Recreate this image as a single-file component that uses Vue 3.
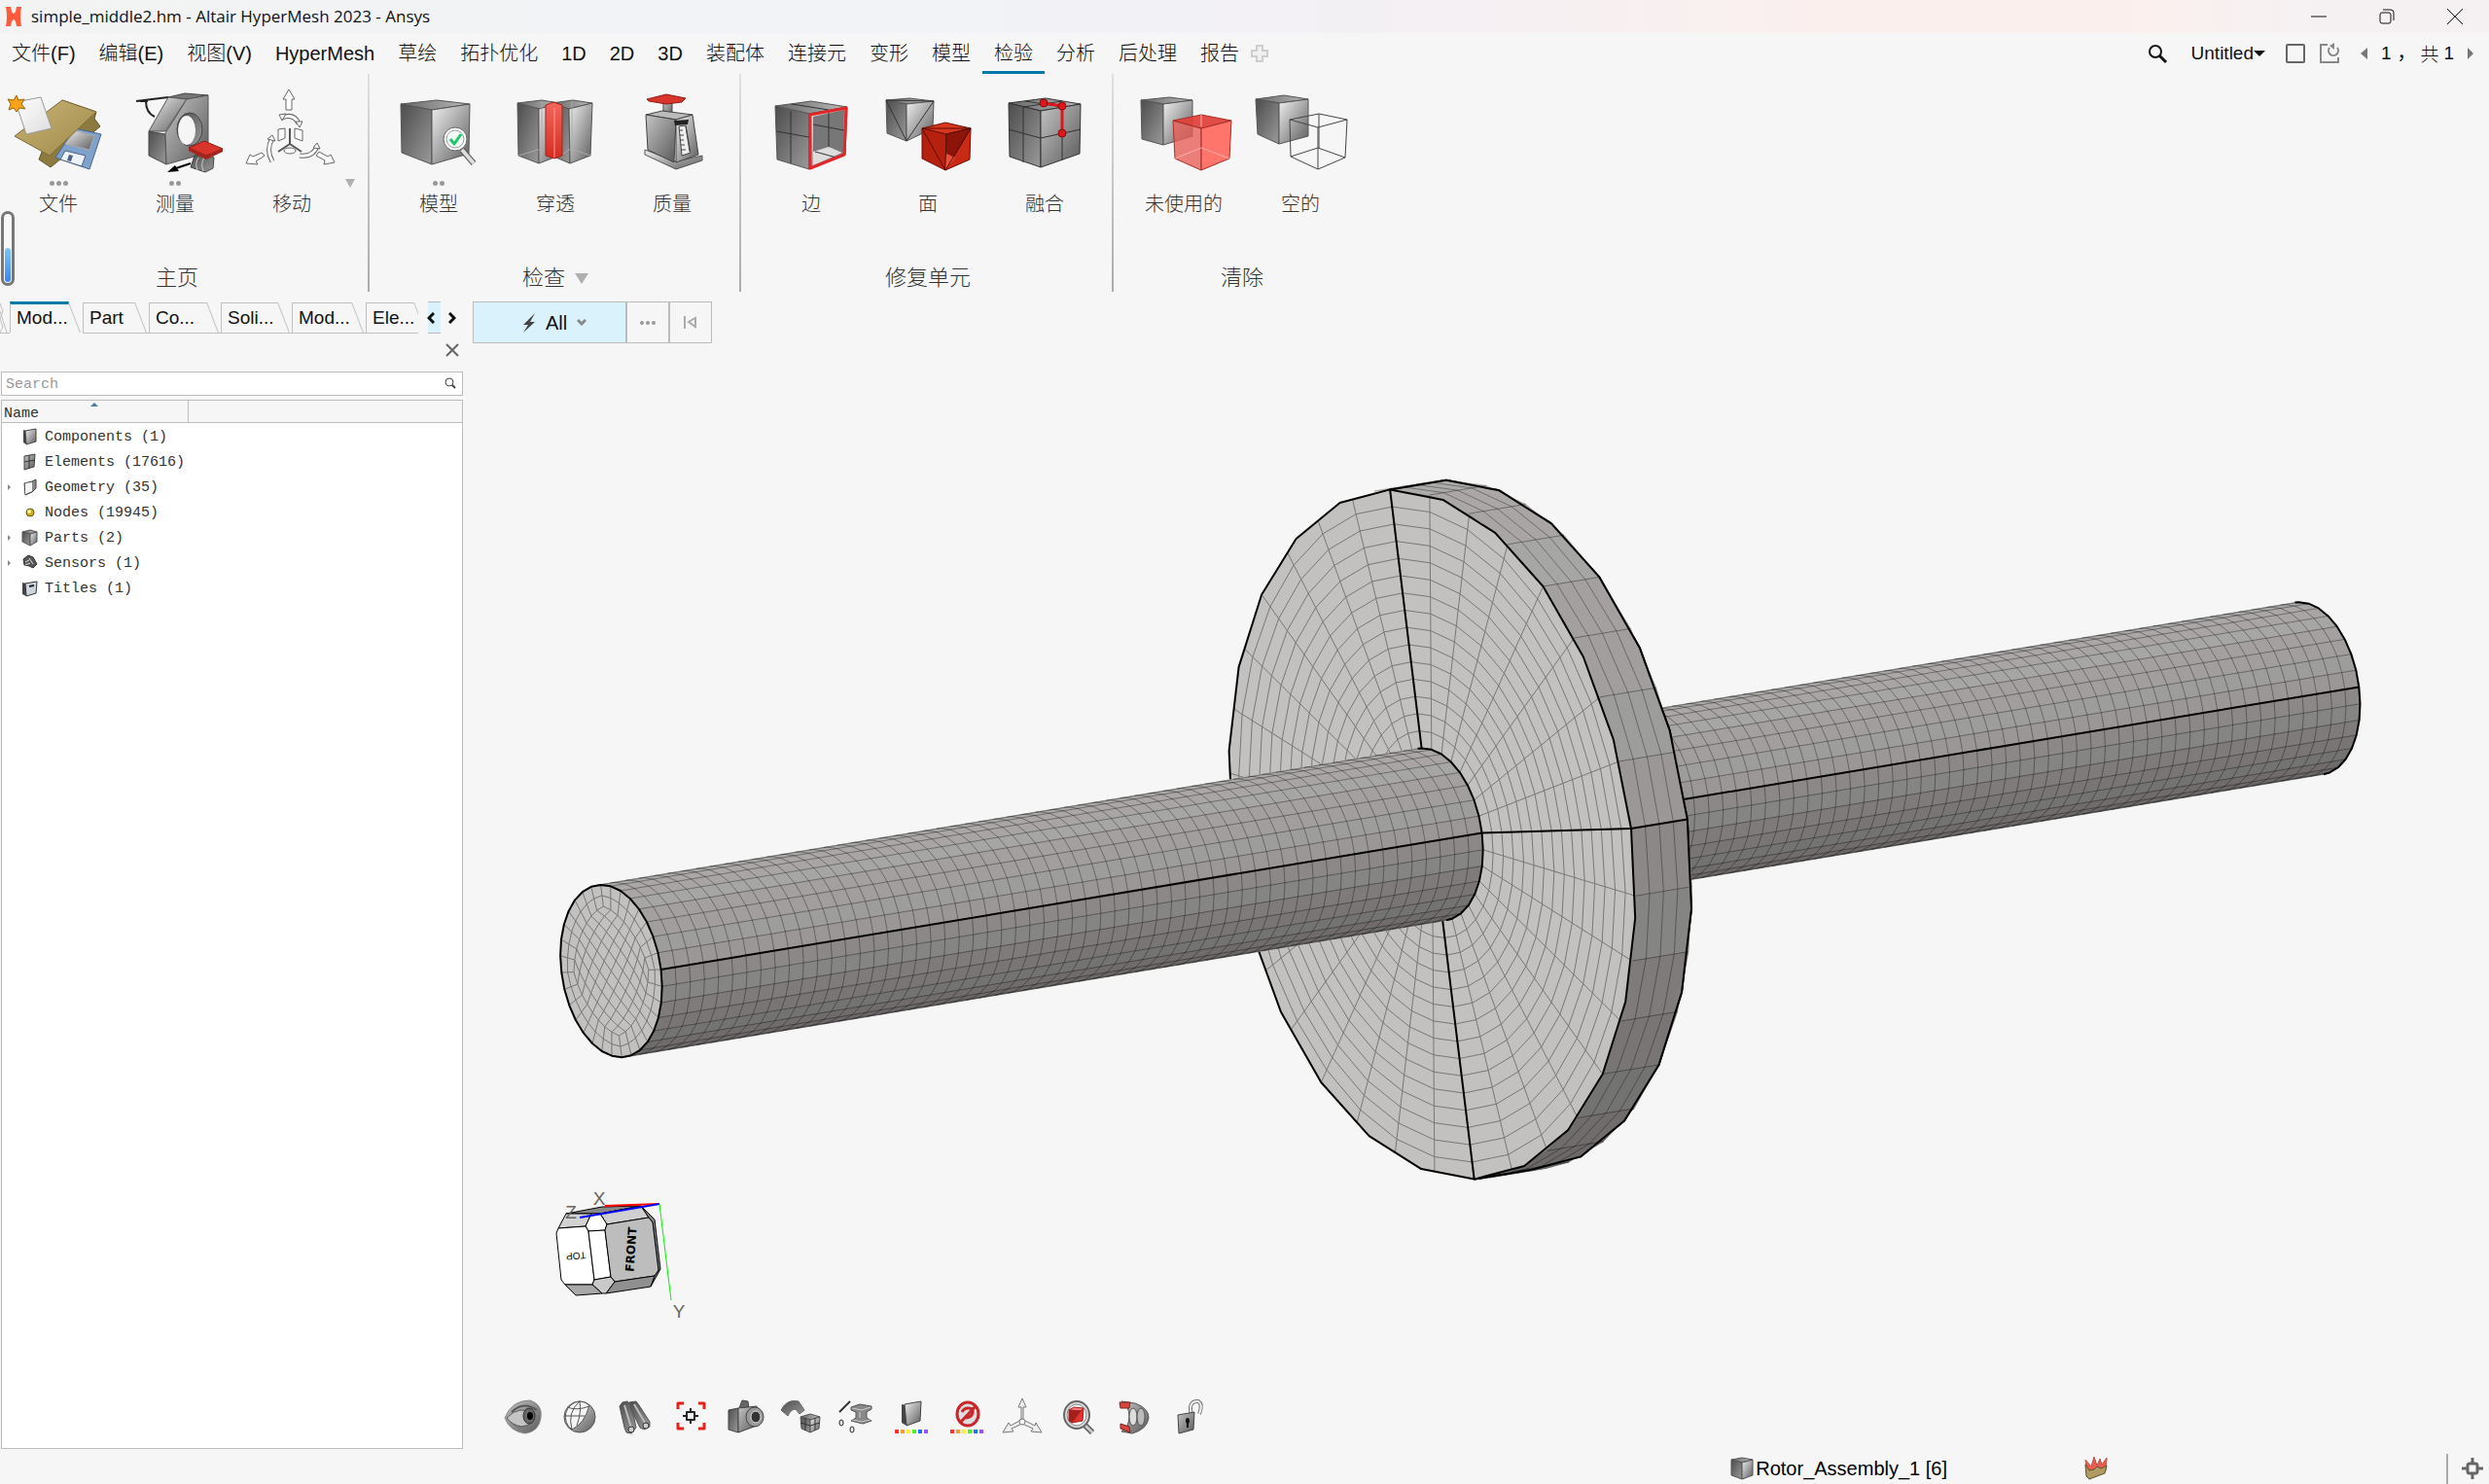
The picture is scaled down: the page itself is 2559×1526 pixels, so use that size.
<script setup>
import { ref } from 'vue'

const menus = ['文件(F)', '编辑(E)', '视图(V)', 'HyperMesh', '草绘', '拓扑优化', '1D', '2D', '3D', '装配体', '连接元', '变形', '模型', '检验', '分析', '后处理', '报告']
const activeMenu = ref('检验')
const query = ref('')

const tabs = [
  { label: 'Mod...', w: 75 },
  { label: 'Part', w: 68 },
  { label: 'Co...', w: 74 },
  { label: 'Soli...', w: 73 },
  { label: 'Mod...', w: 76 },
  { label: 'Ele...', w: 54 }
]

/* ---------- icon helpers ---------- */
const poly = (pts, fill, stroke, w) => ({ d: 'M' + pts.map(p => p.join(',')).join('L') + 'Z', fill, stroke, w })
const line = (d, stroke, w) => ({ d, fill: 'none', stroke, w })
const disc = (x, y, rx, ry, fill, stroke, w) => ({ d: `M${x - rx},${y}a${rx},${ry} 0 1,0 ${2 * rx},0a${rx},${ry} 0 1,0 ${-2 * rx},0Z`, fill, stroke, w })
const box = (l, t, r, f, bl, bf, br, c = ['url(#gTop)', 'url(#gDark)', 'url(#gLight)'], s = '#555') => [
  poly([l, t, r, f], c[0], s, 1),
  poly([l, f, bf, bl], c[1], s, 1),
  poly([f, r, br, bf], c[2], s, 1)
]

const fileIcon = [
  poly([[64, 23], [99, 35], [97, 42], [103, 50], [52, 92], [40, 84]], '#8d7a3f', '#5f522a', 1),
  poly([[77, 52], [104, 58], [92, 94], [57, 82]], '#7ea2cc', '#48658c', 1),
  poly([[77, 54], [97, 60], [92, 74], [67, 68]], 'url(#gLight)', '#aaa', 1),
  poly([[67, 75], [88, 80], [84, 91], [62, 84]], '#eef2f6', '#4a6284', 1),
  poly([[71, 79], [75, 80], [73, 86], [69, 85]], '#4a6284'),
  poly([[64, 23], [99, 35], [51, 80], [15, 60]], 'url(#gTan)', '#7b6a38', 1),
  poly([[16, 25], [42, 20], [53, 52], [27, 58]], 'url(#gPaper)', '#999', 1),
  poly([[17, 18], [19, 23], [25, 22], [22, 27], [26, 32], [20, 31], [17, 35], [14, 31], [9, 33], [11, 27], [8, 22], [14, 23]], '#f7a416', '#9a6510', 1)
]
const measureIcon = [
  line('M20,24L53,20M24,24L32,24M30,24Q30,36 39,40', '#222', 2),
  poly([[53, 20], [70, 16], [94, 18], [72, 22]], '#777', '#444', 1),
  poly([[53, 20], [72, 22], [50, 55], [33, 55]], 'url(#gLight)', '#555', 1),
  poly([[33, 55], [50, 58], [51, 89], [33, 80]], 'url(#gDark)', '#444', 1),
  poly([[72, 22], [94, 18], [94, 77], [51, 89], [50, 57]], 'url(#gMid)', '#555', 1),
  disc(75, 53, 13, 17, 'url(#gDark)', '#444', 1),
  disc(72, 54, 9, 15, '#f5f5f5'),
  line('M76,88L58,94', '#000', 2), poly([[52, 97], [60, 90], [64, 96]], '#000'),
  poly([[80, 80], [94, 78], [100, 82], [99, 93], [91, 97], [76, 92]], 'url(#gDark)', '#444', 1),
  line('M84,82Q80,88 83,95M90,82Q86,88 89,96', '#ccc', 1),
  poly([[74, 72], [90, 65], [109, 73], [92, 80]], '#d8342b', '#8e1c16', 1),
  poly([[74, 72], [92, 80], [109, 73], [109, 76], [92, 84], [74, 75]], '#a4241d')
]
const moveIcon = [
  poly([[57, 12], [63, 22], [60, 22], [60, 33], [54, 33], [54, 22], [51, 22]], '#fff', '#666', 1),
  line('M58,52V68L46,76M58,68L70,76', '#555', 2),
  poly([[46, 53], [53, 52], [53, 62], [46, 65]], '#fff', '#666', 1), poly([[63, 52], [71, 54], [71, 65], [63, 62]], '#fff', '#666', 1),
  disc(58, 75, 6, 3, '#fff', '#666', 1),
  line('M50,41Q62,36 67,47', '#666', 5), line('M50,41Q62,36 67,47', '#fff', 3), poly([[47, 38], [54, 37], [50, 44]], '#fff', '#666', 1), poly([[64, 45], [71, 45], [68, 51]], '#fff', '#666', 1),
  line('M40,86Q33,74 40,62', '#666', 5), line('M40,86Q33,74 40,62', '#fff', 3), poly([[35, 63], [40, 59], [43, 65]], '#fff', '#666', 1),
  line('M68,80Q82,82 86,70', '#666', 5), line('M68,80Q82,82 86,70', '#fff', 3), poly([[82, 72], [86, 67], [89, 73]], '#fff', '#666', 1),
  poly([[13, 88], [17, 79], [20, 81], [29, 77], [32, 80], [23, 86], [25, 89]], '#fff', '#666', 1),
  poly([[104, 87], [100, 79], [97, 81], [88, 76], [85, 80], [94, 85], [93, 89]], '#fff', '#666', 1)
]
const modelIcon = [
  ...box([21, 27], [58, 23], [92, 27], [53, 33], [22, 77], [53, 89], [91, 78]),
  line('M84,74L96,88', '#555', 6), line('M84,74L96,88', '#ddd', 4),
  disc(77, 63, 12, 12, '#fff', '#666', 1), disc(77, 63, 9, 9, '#f4fffa', '#999', 1),
  line('M72,63L76,68L83,58', '#1ec968', 3)
]
const penetrateIcon = [
  ...box([21, 26], [46, 23], [64, 26], [43, 32], [22, 80], [43, 88], [64, 80]),
  ...box([56, 26], [78, 23], [98, 26], [74, 32], [56, 80], [75, 88], [96, 80]),
  line('M22,80L46,73L50,78M68,78L76,73L96,80M46,24V73M77,24V73', '#aaa', 1),
  poly([[50, 28], [58, 25], [67, 28], [67, 80], [59, 83], [50, 80]], 'url(#gRed)', '#a8231b', 1), line('M59,31V82', '#ff9a90', 1)
]
const massIcon = [
  poly([[51, 25], [60, 25], [60, 40], [51, 40]], 'url(#gMid)', '#444', 1),
  poly([[34, 22], [54, 17], [74, 21], [70, 25], [54, 27], [36, 24]], '#d8342b', '#8e1c16', 1),
  poly([[32, 74], [64, 86], [91, 80], [91, 85], [64, 94], [32, 79]], 'url(#gLight)', '#555', 1),
  poly([[33, 38], [50, 34], [81, 38], [64, 43]], '#bbb', '#444', 1),
  poly([[33, 38], [64, 43], [62, 87], [35, 74]], 'url(#gMid)', '#444', 1),
  poly([[64, 43], [81, 38], [87, 79], [64, 87]], 'url(#gLight)', '#444', 1),
  poly([[62, 44], [77, 43], [76, 48], [63, 49]], '#222'),
  poly([[67, 50], [74, 49], [79, 77], [70, 80]], '#eee', '#444', 1),
  line('M67,54h4M68,59h4M68,64h4M69,69h4M70,74h4M74,50L78,76', '#444', 1)
]
const edgeIcon = [
  ...box([23, 29], [60, 24], [97, 30], [58, 37], [25, 84], [58, 94], [95, 79]),
  poly([[62, 40], [94, 33], [92, 77], [62, 90]], '#777'),
  poly([[62, 76], [78, 71], [92, 77], [62, 90]], '#ddd'),
  line('M39,34V88M24,55L58,61M40,27L78,33M62,48L94,54M78,36V71M64,76L86,82', '#333', 1),
  line('M59,38L96,31L94,79L59,93Z', '#e3262a', 3)
]
const faceIcon = [
  ...box([17, 23], [41, 21], [66, 24], [38, 27], [18, 57], [38, 65], [65, 52]),
  line('M17,23L38,65L66,24M17,23L66,24', '#333', 1),
  ...box([54, 52], [78, 46], [104, 52], [79, 58], [54, 83], [78, 95], [103, 84], ['#d8361f', '#b5200f', '#c92a16'], '#6c1208'),
  poly([[79, 58], [104, 52], [78, 95]], '#8c1408', '#5c0d05', 1), poly([[79, 78], [88, 82], [78, 95]], '#e8503c'),
  line('M54,52L78,95L104,52L54,52', '#5c0d05', 1)
]
const mergeIcon = [
  ...box([23, 26], [61, 21], [97, 27], [56, 34], [24, 81], [56, 92], [96, 78], ['url(#gTop)', 'url(#gDark)', 'url(#gMid)'], '#333'),
  line('M38,30V87M23,53L56,62L97,53M40,24L78,30V85M78,24L38,30', '#333', 1),
  line('M59,26L78,29V57', '#e0161c', 3),
  disc(59, 26, 4, 4, '#e0161c', '#8a0d10', 1), disc(78, 29, 4, 4, '#e0161c', '#8a0d10', 1), disc(78, 57, 4, 4, '#e0161c', '#8a0d10', 1)
]
const unusedIcon = [
  ...box([16, 23], [45, 20], [69, 23], [39, 27], [17, 63], [39, 69], [69, 60]),
  ...box([49, 44], [78, 38], [109, 44], [78, 52], [51, 83], [78, 95], [107, 83], ['#e0403aee', '#e8605acc', '#ff6a60ee'], '#a82f29'),
  line('M51,83L78,72L107,83M78,38V50', '#ffb0aa', 1)
]
const emptyIcon = [
  ...box([14, 22], [43, 18], [68, 22], [38, 26], [16, 58], [38, 68], [68, 60]),
  line('M49,43L79,37L108,43L78,51ZM49,43L50,81L78,94L106,82L108,43M78,51V94M50,81L78,72L106,82M79,37V72', '#444', 1)
]

const groups = [
  { label: '主页', arrow: false, more: true, tools: [{ label: '文件', dots: 3, icon: fileIcon }, { label: '测量', dots: 2, icon: measureIcon }, { label: '移动', dots: 0, icon: moveIcon }] },
  { label: '检查', arrow: true, tools: [{ label: '模型', dots: 2, icon: modelIcon }, { label: '穿透', dots: 0, icon: penetrateIcon }, { label: '质量', dots: 0, icon: massIcon }] },
  { label: '修复单元', tools: [{ label: '边', dots: 0, icon: edgeIcon }, { label: '面', dots: 0, icon: faceIcon }, { label: '融合', dots: 0, icon: mergeIcon }] },
  { label: '清除', tools: [{ label: '未使用的', dots: 0, icon: unusedIcon }, { label: '空的', dots: 0, icon: emptyIcon }] }
]

const tree = [
  { label: 'Components (1)', open: false, icon: [poly([[3, 2], [6, 3], [6, 17], [3, 15]], '#444'), poly([[5, 3], [16, 1], [16, 14], [6, 17]], 'url(#gLight)', '#444', 1)] },
  { label: 'Elements (17616)', open: false, icon: [poly([[4, 3], [15, 1], [14, 14], [4, 17]], 'url(#gMid)', '#444', 1), line('M9,2V16M4,9L15,7', '#333', 1)] },
  { label: 'Geometry (35)', open: true, icon: [poly([[4, 5], [12, 3], [16, 1], [16, 10], [12, 14], [5, 17]], '#888', '#444', 1), poly([[5, 5], [12, 4], [12, 13], [5, 16]], '#f4f4f4')] },
  { label: 'Nodes (19945)', open: false, icon: [disc(10, 9, 4, 4, '#c9ab22', '#6b5a10', 1), disc(9, 8, 2, 2, '#fff2a0')] },
  { label: 'Parts (2)', open: true, icon: box([2, 3], [10, 1], [17, 3], [10, 5], [2, 13], [10, 17], [17, 13]) },
  { label: 'Sensors (1)', open: true, icon: [poly([[3, 5], [8, 1], [13, 3], [17, 10], [13, 14], [9, 12], [4, 11]], '#555', '#333', 1), line('M5,8L9,6M5,11L10,9M9,4L13,10', '#ddd', 1)] },
  { label: 'Titles (1)', open: false, icon: [poly([[2, 3], [6, 4], [6, 17], [2, 15]], '#444'), poly([[5, 4], [17, 2], [16, 14], [6, 17]], '#cdd6de', '#333', 1), line('M9,7L14,6', '#222', 2)] }
]

const rainbow = ['#f33', '#f93', '#fe3', '#5e2', '#17f', '#95f'].map((c, i) => poly([[5 + i * 6, 34], [9 + i * 6, 34], [9 + i * 6, 38], [5 + i * 6, 38]], c))
const viewTools = [
  { name: '显示', icon: [{ d: 'M3,22Q10,4 29,4Q42,8 40,22Q38,36 24,38Q8,36 3,22Z', fill: 'url(#gMid)', stroke: '#888', w: 1 }, { d: 'M5,22Q18,8 34,18Q32,30 20,31Q10,29 5,22Z', fill: '#c4c4c4', stroke: '#555', w: 1 }, disc(28, 20, 6, 8, '#666', '#333', 1), disc(29, 20, 3, 4, '#000'), line('M10,16Q22,4 36,14', '#555', 2), line('M8,26Q20,38 34,28', '#777', 1)] },
  { name: '视图', icon: [disc(23, 21, 16, 16, 'url(#gLight)', '#555', 1), { d: 'M23,5A16,16 0 0,0 15,34Q28,28 33,9Q28,5 23,5Z', fill: '#f4f4f4', stroke: '#555', w: 1 }, line('M7,20H28M23,5Q10,16 15,34M23,5Q25,16 20,30M10,11Q20,15 33,10', '#555', 1)] },
  { name: '查找', icon: [poly([[7, 10], [10, 6], [15, 5], [19, 9], [24, 32], [19, 38], [14, 37], [12, 32]], 'url(#gDark)', '#555', 1), poly([[17, 6], [24, 5], [27, 9], [38, 26], [38, 31], [32, 34], [28, 32], [19, 14]], 'url(#gDark)', '#555', 1), line('M12,9L19,32M22,8L33,27', '#bbb', 2), disc(19, 34, 3, 3, '#ccc', '#333', 1), disc(34, 30, 3, 3, '#ccc', '#333', 1)] },
  { name: '适应窗口', icon: [line('M10,13V7H16M31,7H37V13M37,27V33H31M16,33H10V27', '#e0241c', 3), line('M19,16H27V24H19ZM23,12V16M23,24V28M15,20H19M27,20H31', '#222', 2)] },
  { name: '截图', icon: [poly([[16, 12], [19, 4], [25, 5], [26, 14]], '#666', '#444', 1), poly([[5, 14], [15, 12], [15, 37], [5, 34]], 'url(#gDark)', '#444', 1), poly([[15, 12], [34, 10], [34, 30], [15, 37]], 'url(#gMid)', '#444', 1), disc(32, 21, 9, 10, '#999', '#444', 1), disc(33, 21, 5, 6, '#333', '#ddd', 1)] },
  { name: '旋转', icon: [{ d: 'M2,14Q8,2 20,5L26,14L21,18L17,13Q12,13 9,20Z', fill: 'url(#gDark)', stroke: '#666', w: 1 }, ...box([22, 21], [32, 18], [42, 21], [32, 24], [23, 33], [32, 37], [41, 33]), line('M27,22V35M37,22V35M22,27L32,30L42,27', '#333', 1)] },
  { name: '单元', icon: [line('M5,16L16,5', '#333', 2), disc(7, 27, 2, 3, 'none', '#222', 1), disc(18, 34, 2, 3, 'none', '#222', 1), poly([[17, 11], [26, 8], [38, 10], [38, 13], [33, 16], [33, 22], [38, 25], [29, 28], [17, 25], [22, 22], [22, 16], [17, 14]], '#888', '#555', 1), line('M18,12L28,14L37,11M18,24L28,26L37,24M26,16V22', '#ccc', 1)] },
  { name: '颜色', icon: [poly([[12, 8], [16, 9], [17, 30], [12, 27]], '#444'), poly([[15, 8], [32, 5], [31, 25], [17, 30]], 'url(#gLight)', '#444', 1), ...rainbow] },
  { name: '清除颜色', icon: [disc(23, 18, 11, 12, '#ddd', '#c8282b', 3), line('M17,16Q20,10 28,13Q29,22 20,22M16,26L31,10', '#c8282b', 3), ...rainbow] },
  { name: '坐标系', icon: [poly([[22, 2], [26, 11], [23, 11], [23, 24], [35, 30], [36, 27], [42, 37], [31, 36], [33, 33], [22, 28], [11, 33], [13, 36], [2, 37], [8, 27], [10, 30], [21, 24], [21, 11], [18, 11]], '#eee', '#777', 1), disc(22, 26, 3, 3, '#fff', '#777', 1)] },
  { name: '隔离', icon: [line('M29,29L37,37', '#555', 6), line('M29,29L37,37', '#ccc', 3), disc(21, 19, 13, 14, '#ddd', '#666', 2), disc(21, 19, 10, 11, '#f5f5f5', '#888', 1), ...box([13, 14], [18, 11], [28, 12], [25, 15], [13, 25], [16, 27], [27, 25], ['#f77', '#a1201b', '#e0362f'], '#a1201b')] },
  { name: '剖切', icon: [{ d: 'M10,5L24,7Q38,12 38,22Q36,34 21,38L10,36L16,30Q20,20 16,11Z', fill: 'url(#gMid)', stroke: '#555', w: 1 }, disc(22, 21, 4, 9, '#ddd', '#555', 1), disc(30, 21, 4, 9, '#bbb', '#555', 1), poly([[8, 6], [19, 6], [18, 12], [9, 12]], '#d8443e', '#7d2420', 1), poly([[9, 28], [18, 31], [19, 37], [9, 33]], '#d8443e', '#7d2420', 1)] },
  { name: '锁定', icon: [line('M25,20Q21,4 32,5Q37,8 33,18', '#777', 4), line('M25,20Q21,4 32,5Q37,8 33,18', '#eee', 2), poly([[11, 19], [28, 16], [27, 34], [12, 38]], 'url(#gMid)', '#444', 1), disc(21, 25, 2, 3, '#111'), line('M21,26V32', '#111', 2)] }
]

/* ---------- rotor mesh, oblique projection ---------- */
const U = [204.6, -6]
const V = [43.3, 354.6]
const THICK = [57.8, -9.6]
const SHAFT = [844, -140.5]
const FRONT = [1472.4, 857]
const add = (a, b, k = 1) => [a[0] + b[0] * k, a[1] + b[1] * k]
const at = (c, r, deg) => {
  const t = (deg * Math.PI) / 180
  return add(add(c, U, r * Math.cos(t)), V, r * Math.sin(t))
}
const path = (pts, close) => 'M' + pts.map(p => p[0].toFixed(1) + ' ' + p[1].toFixed(1)).join('L') + (close ? 'Z' : '')
const span = (a, b, step) => {
  const out = []
  for (let t = a; t < b - 0.01; t += step) out.push(t)
  out.push(b)
  return out
}
const STEP = 11.25
const LO = -94.5
const HI = 85.5
const BACK = add(FRONT, THICK)

const stops = [[-95, 172], [-60, 167], [-25, 159], [-1, 151], [1, 141], [20, 130], [45, 116], [70, 107], [90, 102]]
function shade(deg, k) {
  let i = 0
  while (i < stops.length - 2 && deg > stops[i + 1][0]) i++
  const [a, va] = stops[i]
  const [b, vb] = stops[i + 1]
  const v = Math.round(va + ((vb - va) * (deg - a)) / (b - a))
  const tint = Math.abs(k) % 3 === 1 ? 0 : 3
  return `rgb(${v + 1},${v - tint + 1},${v - tint})`
}
function tube(c0, axis, r, n) {
  const angles = [LO, ...span(-90, 78.75, STEP), HI]
  const c1 = add(c0, axis)
  const facets = []
  for (let i = 0; i < angles.length - 1; i++) {
    const [a, b] = [angles[i], angles[i + 1]]
    facets.push({ d: path([at(c0, r, a), at(c0, r, b), at(c1, r, b), at(c1, r, a)], true), fill: shade((a + b) / 2, i) })
  }
  let mesh = ''
  for (const a of angles.slice(1, -1)) mesh += path([at(c0, r, a), at(c1, r, a)])
  for (let i = 1; i < n; i++) mesh += path(angles.map(a => at(add(c0, axis, i / n), r, a)))
  return { facets, mesh, zero: path([at(c0, r, 0), at(c1, r, 0)]), arc: path(angles.map(a => at(c1, r, a))) }
}
const START = add(FRONT, SHAFT, -1)
const rear = tube(BACK, SHAFT, 0.25, 58)
const nearShaft = tube(START, SHAFT, 0.25, 58)
const rim = tube(BACK, [-THICK[0], -THICK[1]], 1, 4)
const rimOuter = path([at(FRONT, 1, -90), ...span(-90, 90, 15).map(a => at(BACK, 1, a)), at(FRONT, 1, 90)])
const faceOutline = path(span(0, 345, 15).map(a => at(FRONT, 1, a)), true)

let faceMesh = ''
for (let k = 0; k < 32; k++) faceMesh += path([at(FRONT, 0.25, k * STEP), at(FRONT, 0.995, k * STEP)])
for (let i = 1; i < 15; i++) faceMesh += path(span(0, 348.75, STEP).map(a => at(FRONT, 0.25 + (0.75 * i) / 15, a)), true)
const faceAxes = path([at(FRONT, 0.25, -90), at(FRONT, 1, -90)]) + path([at(FRONT, 0.25, 90), at(FRONT, 1, 90)]) + path([at(FRONT, 0.25, 0), at(FRONT, 1, 0)])

/* butterfly mesh of the shaft end */
const coreR = k => 0.25 * (0.75 - 0.08 * Math.sin((Math.PI * (k % 8)) / 8))
const rim32 = k => at(START, coreR(k), k * STEP)
let capMesh = ''
for (let k = 0; k < 32; k++) capMesh += path([rim32(k), at(START, 0.25, k * STEP)])
capMesh += path([...Array(32).keys()].map(rim32), true)
capMesh += path([...Array(32).keys()].map(k => at(START, (coreR(k) + 0.25) / 2, k * STEP)), true)
const core = (i, j) => {
  const s = i / 8
  const t = j / 8
  const bottom = rim32(i)
  const right = rim32(8 + j)
  const top = rim32(24 - i)
  const left = rim32((32 - j) % 32)
  const [p00, p10, p11, p01] = [rim32(0), rim32(8), rim32(16), rim32(24)]
  return [0, 1].map(n => (1 - t) * bottom[n] + t * top[n] + (1 - s) * left[n] + s * right[n] - ((1 - s) * (1 - t) * p00[n] + s * (1 - t) * p10[n] + s * t * p11[n] + (1 - s) * t * p01[n]))
}
for (let i = 1; i < 8; i++) {
  capMesh += path([...Array(9).keys()].map(j => core(i, j)))
  capMesh += path([...Array(9).keys()].map(j => core(j, i)))
}
const capOutline = path(span(0, 348.75, STEP).map(a => at(START, 0.25, a)), true)
</script>

<template>
  <div class="app">
    <svg class="defs" width="0" height="0" aria-hidden="true">
      <defs>
        <linearGradient id="gTop" x1="0" y1="0" x2="1" y2="0"><stop offset="0" stop-color="#666" /><stop offset="1" stop-color="#bbb" /></linearGradient>
        <linearGradient id="gDark" x1="0" y1="0" x2="1" y2="1"><stop offset="0" stop-color="#4c4c4c" /><stop offset="1" stop-color="#9a9a9a" /></linearGradient>
        <linearGradient id="gLight" x1="0" y1="0" x2="1" y2="1"><stop offset="0" stop-color="#f0f0f0" /><stop offset="1" stop-color="#5c5c5c" /></linearGradient>
        <linearGradient id="gMid" x1="0" y1="0" x2="1" y2="1"><stop offset="0" stop-color="#c4c4c4" /><stop offset="1" stop-color="#5a5a5a" /></linearGradient>
        <linearGradient id="gRed" x1="0" y1="0" x2="0" y2="1"><stop offset="0" stop-color="#f4675c" /><stop offset="1" stop-color="#d42c20" /></linearGradient>
        <linearGradient id="gTan" x1="0" y1="0" x2="1" y2="1"><stop offset="0" stop-color="#c9b375" /><stop offset="1" stop-color="#a08a4a" /></linearGradient>
        <linearGradient id="gPaper" x1="0" y1="0" x2="1" y2="1"><stop offset="0" stop-color="#fff" /><stop offset="1" stop-color="#ddd" /></linearGradient>
      </defs>
    </svg>

    <header class="titlebar">
      <svg class="logo" width="18" height="20" viewBox="0 0 18 20"><path d="M1,0H6Q7,7 9,7Q11,7 12,0H17Q15,10 17,20H12Q11,13 9,13Q7,13 6,20H1Q3,10 1,0Z" fill="#ff5a3c" /></svg>
      <span class="title">simple_middle2.hm - Altair HyperMesh 2023 - Ansys</span>
      <div class="wincontrols">
        <button aria-label="最小化"><svg width="16" height="16"><path d="M0,8H16" stroke="#111" stroke-width="1" /></svg></button>
        <button aria-label="还原"><svg width="16" height="16" fill="none" stroke="#111" stroke-width="1"><rect x="1" y="4" width="11" height="11" rx="2" /><path d="M4,1H12Q15,1 15,4V12" /></svg></button>
        <button aria-label="关闭"><svg width="16" height="16"><path d="M0,0L16,16M16,0L0,16" stroke="#111" stroke-width="1" /></svg></button>
      </div>
    </header>

    <nav class="menubar">
      <button v-for="m in menus" :key="m" :class="{ active: m === activeMenu }" @click="activeMenu = m">{{ m }}</button>
      <button class="addpage" aria-label="添加"><svg width="18" height="18"><path d="M6,1H12V6H17V12H12V17H6V12H1V6H6Z" fill="#f0f0f0" stroke="#ccc" stroke-width="2" /></svg></button>
      <div class="session">
        <button aria-label="搜索" class="find"><svg width="22" height="22" fill="none" stroke="#111" stroke-width="2"><circle cx="9" cy="9" r="6" /><path d="M13,13L20,20" stroke-width="3" /></svg></button>
        <button class="page">Untitled<svg width="12" height="8"><path d="M0,1H12L6,7Z" fill="#111" /></svg></button>
        <button aria-label="布局" class="layout"><svg width="22" height="22"><rect x="2" y="2" width="18" height="18" rx="1" fill="none" stroke="#666" stroke-width="2" /></svg></button>
        <button aria-label="刷新" class="reload"><svg width="24" height="22" fill="none" stroke="#888" stroke-width="2"><path d="M10,2H3V20H21V15" /><path d="M12,5A5,5 0 1,0 20,5" /><path d="M17,0L12,3L17,7Z" fill="#888" stroke="none" /></svg></button>
        <button aria-label="上一页" class="step"><svg width="8" height="12"><path d="M7,0V12L0,6Z" fill="#777" /></svg></button>
        <span class="count"><b>1</b><i>，</i><em>共</em><b>1</b></span>
        <button aria-label="下一页" class="step"><svg width="8" height="12"><path d="M1,0V12L7,6Z" fill="#777" /></svg></button>
      </div>
    </nav>

    <section class="ribbon">
      <div class="slider" aria-hidden="true"><span></span></div>
      <div v-for="g in groups" :key="g.label" class="group">
        <div class="tools">
          <button v-for="t in g.tools" :key="t.label" class="tool">
            <svg width="120" height="100" viewBox="0 0 120 100"><path v-for="(s, i) in t.icon" :key="i" :d="s.d" :fill="s.fill" :stroke="s.stroke" :stroke-width="s.w" stroke-linejoin="round" /></svg>
            <span class="dots"><i v-for="n in t.dots" :key="n"></i></span>
            <span class="label">{{ t.label }}</span>
          </button>
          <button v-if="g.more" class="more" aria-label="更多"><svg width="10" height="9"><path d="M0,0H10L5,9Z" fill="#b0b0b0" /></svg></button>
        </div>
        <div class="caption">{{ g.label }}<svg v-if="g.arrow" width="14" height="11"><path d="M0,0H14L7,11Z" fill="#b0b0b0" /></svg></div>
      </div>
    </section>

    <main class="work">
      <aside class="browser">
        <div class="tabs">
          <span class="stub"><svg width="10" height="32" fill="none" stroke="#c0c0c0"><path d="M0,2L3,10L0,18L3,26L0,32M0,10L7,32" /></svg></span>
          <button v-for="(t, i) in tabs" :key="i" class="tab" :class="{ current: i === 0, cut: i === 5 }" :style="{ width: t.w + 'px' }">{{ t.label }}</button>
          <button class="prev" aria-label="向左"><svg width="8" height="12"><path d="M7,1L2,6L7,11" fill="none" stroke="#111" stroke-width="3" /></svg></button>
          <button class="next" aria-label="向右"><svg width="8" height="12"><path d="M1,1L6,6L1,11" fill="none" stroke="#111" stroke-width="3" /></svg></button>
        </div>
        <div class="closerow"><button aria-label="关闭面板"><svg width="14" height="14"><path d="M1,1L13,13M13,1L1,13" stroke="#666" stroke-width="2" /></svg></button></div>
        <label class="search">
          <input v-model="query" type="text" placeholder="Search" aria-label="Search" />
          <svg width="13" height="13" fill="none" stroke="#444" stroke-width="1"><circle cx="6" cy="5" r="4" /><path d="M9,8L12,11" stroke-width="2" /></svg>
        </label>
        <div class="treebox">
          <div class="treehead"><span>Name</span><svg width="8" height="4"><path d="M0,4L4,0L8,4Z" fill="#4a7f9c" /></svg></div>
          <ul>
            <li v-for="n in tree" :key="n.label">
              <svg class="twist" width="8" height="8"><path v-if="n.open" d="M2,1V7L5,4Z" fill="#888" /></svg>
              <svg width="20" height="18"><path v-for="(s, i) in n.icon" :key="i" :d="s.d" :fill="s.fill" :stroke="s.stroke" :stroke-width="s.w" /></svg>
              <span>{{ n.label }}</span>
            </li>
          </ul>
        </div>
      </aside>

      <section class="view">
        <div class="selection">
          <button class="all">
            <svg width="14" height="20"><path d="M13,0L1,12H6L1,20L13,9H8Z" fill="#444" /></svg>All<svg width="10" height="8"><path d="M1,1L5,5L9,1" fill="none" stroke="#888" stroke-width="3" /></svg>
          </button>
          <button aria-label="选项"><svg width="16" height="4" fill="#999"><circle cx="2" cy="2" r="2" /><circle cx="8" cy="2" r="2" /><circle cx="14" cy="2" r="2" /></svg></button>
          <button aria-label="重置"><svg width="14" height="13" fill="none" stroke="#aaa" stroke-width="2"><path d="M1,0V13M12,2V11L5,6Z" /></svg></button>
        </div>

        <svg class="scene" viewBox="477 352 2082 1070" preserveAspectRatio="xMidYMid meet" fill="none">
          <clipPath id="faceClip"><path :d="faceOutline" /></clipPath>
          <path v-for="(f, i) in rear.facets" :key="'r' + i" :d="f.d" :fill="f.fill" :stroke="f.fill" />
          <path :d="rear.mesh" class="sidemesh" />
          <path :d="rear.zero" class="bold" /><path :d="rear.arc" class="bold" />
          <path :d="rimOuter" fill="#8a8785" class="bold" />
          <path v-for="(f, i) in rim.facets" :key="'m' + i" :d="f.d" :fill="f.fill" :stroke="f.fill" />
          <path :d="rim.mesh" class="sidemesh" />
          <path :d="rim.zero" class="bold" /><path :d="rimOuter" class="bold" />
          <path :d="faceOutline" fill="#c2c1bf" />
          <path :d="faceMesh" class="facemesh" clip-path="url(#faceClip)" />
          <path :d="faceOutline" class="bold" /><path :d="faceAxes" class="bold" />
          <path v-for="(f, i) in nearShaft.facets" :key="'n' + i" :d="f.d" :fill="f.fill" :stroke="f.fill" />
          <path :d="nearShaft.mesh" class="sidemesh" />
          <path :d="nearShaft.zero" class="bold" /><path :d="nearShaft.arc" class="bold" />
          <path :d="capOutline" fill="#c2c1bf" />
          <path :d="capMesh" class="facemesh" />
          <path :d="capOutline" class="bold" />

          <g stroke="#000" stroke-width="1" stroke-linejoin="round">
            <path d="M582,1247L619,1240L659,1239L617,1247Z" fill="#888" />
            <path d="M574,1262L582,1247H608L602,1260Z" fill="#d2d2d2" />
            <path d="M617,1247L659,1239L667,1251L624,1258Z" fill="#cfcfcf" />
            <path d="M659,1239L673,1253L679,1304L669,1322L673,1311L677,1305L671,1256L667,1251Z" fill="#888" />
            <path d="M608,1247H617L624,1258L622,1264L605,1265L602,1260Z" fill="#fff" />
            <path d="M574,1262L602,1260L605,1265L611,1315L609,1320H581L577,1315L572,1267Z" fill="#fff" />
            <path d="M605,1265L622,1264L628,1312L611,1315Z" fill="#fff" />
            <path d="M622,1264L624,1258L667,1251L671,1256L677,1305L673,1311L632,1317L628,1312Z" fill="#bdbdbd" />
            <path d="M632,1317L673,1311L669,1322L623,1329Z" fill="#8f8f8f" />
            <path d="M611,1315L628,1312L632,1317L623,1329L619,1329L609,1320Z" fill="#c9c9c9" />
            <path d="M581,1320H609L619,1329L592,1331Z" fill="#a8a8a8" />
          </g>
          <path d="M678,1237L622,1239" stroke="#f00" stroke-width="2" />
          <path d="M678,1237L596,1251" stroke="#00f" stroke-width="2" />
          <path d="M678,1237L690,1336" stroke="#0e0" stroke-width="1" />
          <text x="616" y="1238" class="axis">X</text>
          <text x="587" y="1252" class="axis">Z</text>
          <text x="698" y="1354" class="axis">Y</text>
          <text class="cubetext small" transform="translate(592 1287) rotate(176)">TOP</text>
          <text class="cubetext" transform="translate(653 1284) rotate(-86)">FRONT</text>
        </svg>

        <div class="viewbar">
          <button v-for="t in viewTools" :key="t.name" :aria-label="t.name">
            <svg width="44" height="42"><path v-for="(s, i) in t.icon" :key="i" :d="s.d" :fill="s.fill" :stroke="s.stroke" :stroke-width="s.w" stroke-linejoin="round" /></svg>
          </button>
        </div>
      </section>
    </main>

    <footer class="status">
      <button class="part"><svg width="24" height="24"><path v-for="(s, i) in box([1, 3], [12, 1], [23, 3], [12, 6], [1, 19], [12, 23], [23, 19])" :key="i" :d="s.d" :fill="s.fill" :stroke="s.stroke" /></svg>Rotor_Assembly_1 [6]</button>
      <button class="fire" aria-label="材料"><svg width="24" height="24"><path d="M3,16L1,3L7,10L10,0L13,9L16,2L18,8L23,1L22,14Z" fill="#ef5b4c" stroke="#b0584a" /><path d="M1,8L5,14L10,13L13,10L17,12L23,9L21,17L5,23L2,20Z" fill="#b09c63" stroke="#5d5230" /></svg></button>
      <span class="tail"><button aria-label="设置"><svg width="22" height="22" fill="none" stroke="#666" stroke-width="3"><rect x="6" y="6" width="10" height="10" rx="2" /><path d="M11,0V6M11,16V22M0,11H6M16,11H22" /></svg></button></span>
    </footer>
  </div>
</template>

<style>
html, body { background: #f6f6f6; }
</style>

<style scoped>
.app { min-height: 100vh; display: flex; flex-direction: column; background: #f6f6f6; color: #111; font-family: "Liberation Sans", "Noto Sans CJK SC", sans-serif; font-size: 20px; line-height: 24px; font-weight: 300; }
.app * { box-sizing: border-box; }
.defs { position: absolute; }
button { border: 0; background: none; padding: 0; margin: 0; font: inherit; color: inherit; display: flex; align-items: center; justify-content: center; white-space: nowrap; }
svg { display: block; flex: none; }

.titlebar { height: 34px; display: flex; align-items: center; padding-left: 5px; background: linear-gradient(90deg, #f3f3f3 0%, #f1f3f7 35%, #f3f0f4 55%, #fbefed 75%, #fbefed 85%, #f5f1f2 93%); }
.title { margin-left: 9px; font: 17px/24px "Open Sans", sans-serif; color: #111; }
.wincontrols { margin-left: auto; display: flex; }
.wincontrols button { width: 70px; height: 34px; }

.menubar { height: 42px; display: flex; align-items: stretch; }
.menubar > button { padding: 0 12px; border-bottom: 3px solid transparent; border-top: 3px solid transparent; }
.menubar > button.active { border-bottom-color: #0078a8; }
.menubar > .addpage { padding: 0; }
.session { margin-left: auto; display: flex; align-items: center; font-size: 19px; }
.find { margin-right: 24px; }
.page { margin-right: 20px; }
.layout { margin-right: 12px; }
.reload { margin-right: 20px; }
.count { display: flex; width: 101px; padding-left: 13px; }
.count b, .count i, .count em { font-weight: 400; font-style: normal; }
.count i { width: 30px; padding-left: 6px; }
.count em { width: 24px; font-family: "Noto Sans CJK SC", sans-serif; font-weight: 300; }
.session > .step:last-child { margin-right: 15px; }

.ribbon { height: 229px; display: flex; position: relative; }
.slider { position: absolute; left: 1px; top: 141px; width: 14px; height: 77px; border: 3px solid #777; border-radius: 7px; background: #f8f8f8; padding: 35px 1px 1px; }
.slider span { display: block; height: 100%; border-radius: 3px; background: linear-gradient(#7cc4f8, #3a86f0); }
.group { position: relative; height: 224px; padding: 4px 11px 0 11px; display: flex; flex-direction: column; justify-content: space-between; }
.group:nth-child(2) { padding: 4px 2px 0 0; }
.group:not(:last-child)::after { content: ""; position: absolute; right: 0; top: 0; width: 2px; height: 224px; background: linear-gradient(#e0e0e0, #aaa); }
.group:nth-child(n+4) { padding-left: 12px; }
.tools { display: flex; }
.tool { width: 120px; flex-direction: column; justify-content: flex-start; }
.dots { height: 16px; display: flex; align-items: center; gap: 2px; }
.dots i { width: 5px; height: 5px; border-radius: 50%; background: #999; }
.label { height: 28px; line-height: 28px; color: #333; }
.more { width: 18px; height: 16px; margin: 100px 0 0; padding-right: 18px; }
.caption { width: 100%; height: 28px; font-size: 22px; line-height: 28px; display: flex; justify-content: center; align-items: center; gap: 10px; color: #333; }
.group:nth-child(2) .caption { padding-right: 14px; }

.work { flex: 1; display: flex; min-height: 0; padding-top: 5px; }
.browser { width: 477px; flex: none; display: flex; flex-direction: column; }
.tabs { height: 33px; display: flex; align-items: stretch; font-size: 19px; }
.stub { width: 10px; border-bottom: 1px solid #c0c0c0; }
.tab { position: relative; justify-content: flex-start; padding: 2px 0 0 7px; border-bottom: 1px solid #c0c0c0; }
.tab::before { content: ""; position: absolute; inset: 1px 14px 0 0; border-left: 1px solid #c0c0c0; border-top: 1px solid #c0c0c0; }
.tab::after { content: ""; position: absolute; top: 1px; bottom: 0; right: 14px; border-right: 1px solid #c0c0c0; transform: skewX(21deg); transform-origin: top; }
.tab.current { border-bottom-color: transparent; }
.tab.current::before { inset: 0 14px 0 0; border-top: 3px solid #0078a8; }
.tab.cut::before, .tab.cut::after { right: 4px; }
.tab.cut { overflow: hidden; }
.prev { width: 13px; margin-left: 10px; padding-right: 8px; background: #d9f2fb; border-top: 1px solid #bbb; border-bottom: 1px solid #bbb; }
.next { width: 24px; }
.closerow { height: 39px; display: flex; justify-content: flex-end; padding-right: 5px; }
.closerow button { width: 14px; height: 34px; }
.search { height: 25px; margin: 0 1px; background: #fff; border: 1px solid #bcbcbc; display: flex; align-items: center; padding-right: 6px; }
.search input { flex: 1; border: 0; outline: 0; background: none; padding: 2px 4px 0; height: 22px; font: 15px/20px "Liberation Mono", monospace; color: #222; }
.search input::placeholder { color: #999; opacity: 1; }
.treebox { flex: 1; margin: 4px 1px 0; border: 1px solid #bcbcbc; background: #fff; font: 15px/26px "Liberation Mono", monospace; color: #333; }
.treehead { position: relative; height: 23px; background: #f6f6f6; border-bottom: 1px solid #bcbcbc; display: flex; }
.treehead span { width: 192px; padding: 2px 2px 0; border-right: 1px solid #bcbcbc; line-height: 24px; }
.treehead svg { position: absolute; left: 91px; top: 2px; }
.treebox ul { list-style: none; margin: 0; padding: 1px 0 0; }
.treebox li { height: 26px; display: flex; align-items: center; padding-left: 4px; }
.twist { margin-right: 7px; }
.treebox li span { margin-left: 5px; padding-top: 1px; }

.view { flex: 1; min-width: 0; display: flex; flex-direction: column; }
.selection { display: flex; height: 43px; padding-left: 9px; }
.selection button { width: 44px; border: 1px solid #bbb; }
.selection .all { width: 158px; background: #d9f2fb; gap: 10px; padding-left: 10px; }
.scene { flex: 1; width: 100%; min-height: 0; }
.bold { stroke: #000; stroke-width: 2; stroke-linejoin: round; }
.sidemesh { stroke: #000; stroke-opacity: 0.34; stroke-width: 1; }
.facemesh { stroke: #777; stroke-width: 1; }
.axis { font: 19px "Liberation Sans", sans-serif; fill: #666; text-anchor: middle; }
.cubetext { font: bold 12px "DejaVu Sans", sans-serif; fill: #000; text-anchor: middle; }
.cubetext.small { font: 10px "Liberation Sans", sans-serif; }
.viewbar { height: 67px; display: flex; gap: 13px; padding-left: 39px; align-items: center; }
.viewbar button { width: 44px; }

.status { height: 36px; display: flex; align-items: center; padding-top: 4px; }
.part { margin-left: auto; gap: 2px; color: #000; }
.fire { margin-left: 141px; }
.tail { margin-left: 348px; height: 31px; border-left: 2px solid #aaa; padding: 0 6px 0 14px; display: flex; }
</style>
